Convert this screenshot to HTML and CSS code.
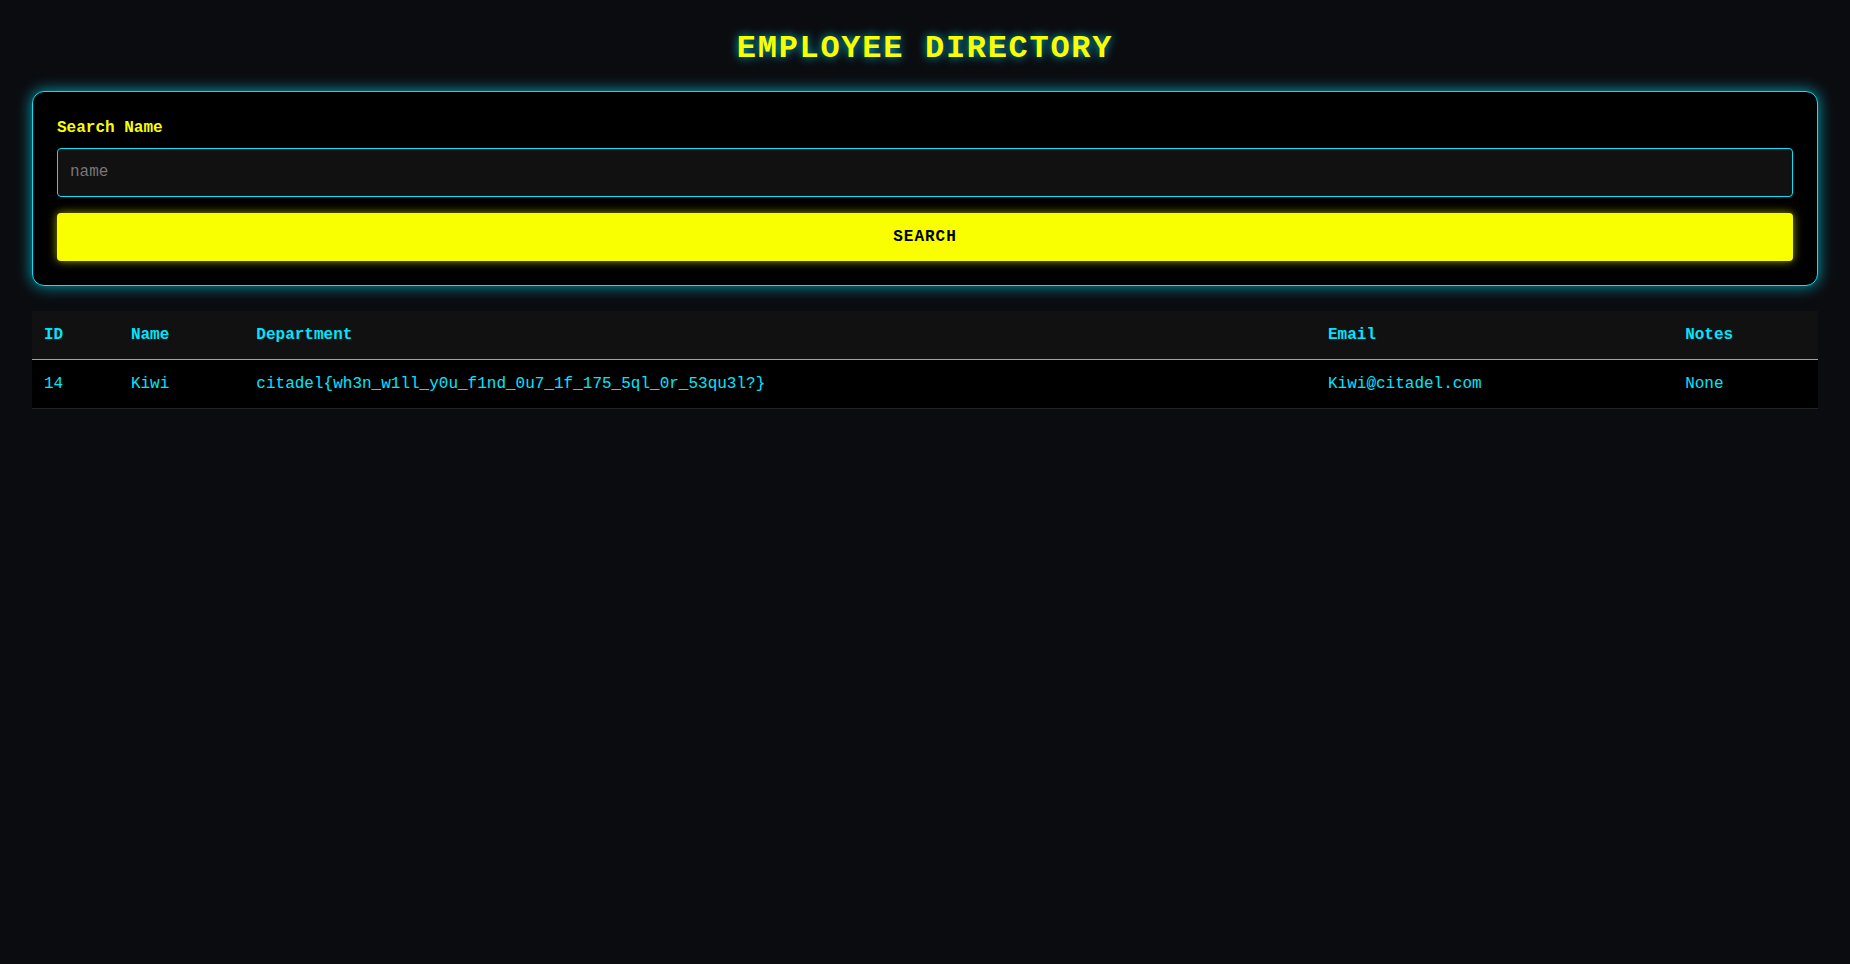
FILE: index.html
```html
<!DOCTYPE html>
<html lang="en">
<head>
<meta charset="utf-8">
<title>Employee Directory</title>
<link rel="stylesheet" href="styles.css">
</head>
<body>
<main class="page">
  <h1 class="title">EMPLOYEE DIRECTORY</h1>
  <form class="card">
    <label class="label" for="name">Search Name</label>
    <input class="input" id="name" type="text" placeholder="name">
    <button class="button" type="button">SEARCH</button>
  </form>
  <table class="table">
    <thead>
      <tr>
        <th>ID</th>
        <th>Name</th>
        <th>Department</th>
        <th>Email</th>
        <th>Notes</th>
      </tr>
    </thead>
    <tbody>
      <tr>
        <td>14</td>
        <td>Kiwi</td>
        <td>citadel{wh3n_w1ll_y0u_f1nd_0u7_1f_175_5ql_0r_53qu3l?}</td>
        <td>Kiwi@citadel.com</td>
        <td>None</td>
      </tr>
    </tbody>
  </table>
</main>
</body>
</html>
```

FILE: styles.css
```css
html, body {
  margin: 0;
  padding: 0;
  background: #0b0c10;
}
body {
  font-family: "Liberation Mono", "Courier New", monospace;
  font-size: 16px;
  line-height: 1.5;
  color: #00e5ff;
}
.page {
  padding: 31px 32px;
  display: flex;
  flex-direction: column;
}
.title {
  margin: 0 0 24px;
  text-align: center;
  font-size: 32px;
  line-height: 36px;
  font-weight: bold;
  letter-spacing: 1.7px;
  color: #faff00;
  text-shadow: 0 0 10px rgba(0, 229, 255, 0.8);
}
.card {
  display: flex;
  flex-direction: column;
  background: #000;
  border: 1px solid #00e5ff;
  border-radius: 12px;
  padding: 24px;
  box-shadow: 0 0 15px rgba(0, 229, 255, 0.7);
}
.label {
  color: #faff00;
  font-weight: bold;
  line-height: 24px;
  margin-bottom: 8px;
}
.input {
  font-family: inherit;
  font-size: 16px;
  line-height: 19px;
  padding: 14px 12px;
  background: #111;
  color: #00e5ff;
  border: 1px solid #00e5ff;
  border-radius: 4px;
  outline: none;
  margin: 0 0 16px;
}
.input::placeholder {
  color: #777;
}
.button {
  font-family: inherit;
  font-size: 16px;
  font-weight: bold;
  letter-spacing: 1px;
  line-height: 20px;
  padding: 14px;
  background: #faff00;
  color: #000;
  border: none;
  border-radius: 4px;
  box-shadow: 0 0 10px rgba(250, 255, 0, 0.6);
  cursor: pointer;
}
.table {
  margin-top: 25px;
  width: 100%;
  border-collapse: collapse;
}
.table th,
.table td {
  text-align: left;
  padding: 12px;
  line-height: 24px;
}
.table th {
  background: #111;
  color: #00e5ff;
  font-weight: bold;
  border-bottom: 1px solid #00e5ff;
}
.table td {
  background: #000;
  color: #00e5ff;
  border-bottom: 1px solid #222;
}
```
